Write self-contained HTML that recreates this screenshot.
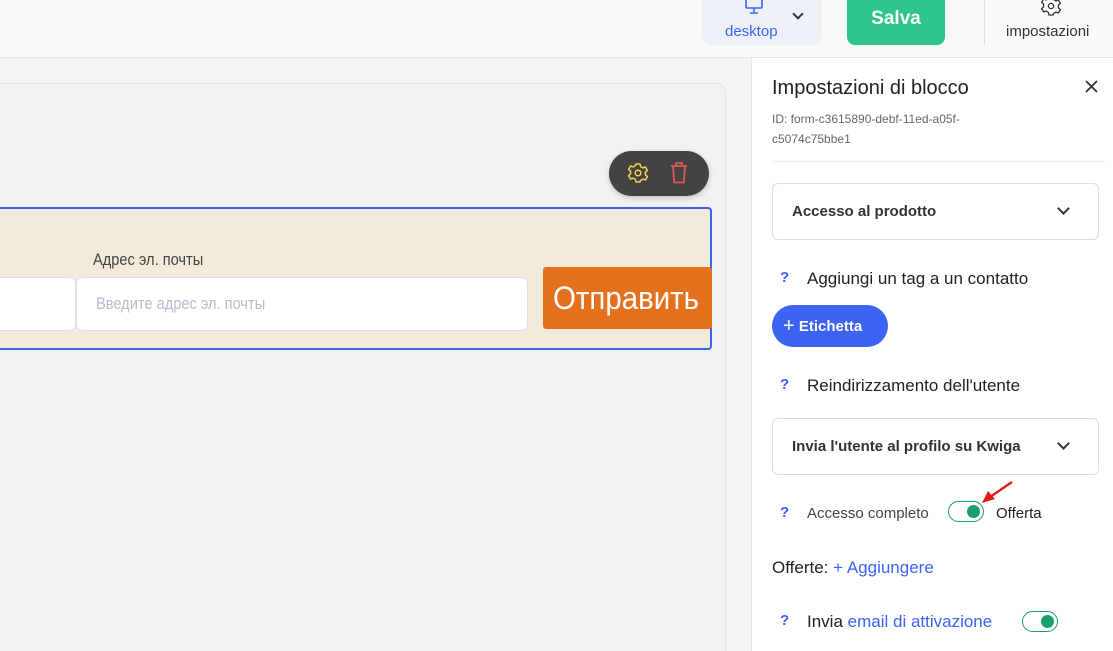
<!DOCTYPE html>
<html><head><meta charset="utf-8"><style>
*{box-sizing:border-box;margin:0;padding:0}
html,body{width:1113px;height:651px;overflow:hidden}
body{font-family:"Liberation Sans","DejaVu Sans",sans-serif;background:#f4f4f6;position:relative}
.top{position:absolute;left:0;top:0;width:1113px;height:58px;background:#fafafd;border-bottom:1px solid #e3e3e8}
.dev{position:absolute;left:702px;top:0;width:120px;height:45px;background:#eff1f8;border-radius:0 0 8px 8px}
.save{position:absolute;left:847px;top:0;width:98px;height:45px;background:#2ec48c;border-radius:0 0 8px 8px;color:#fff;font-weight:bold;font-size:19px;text-align:center;line-height:36px}
.canvas{position:absolute;left:-10px;top:83px;width:736px;height:600px;background:#f2f2f2;border:1px solid #e2e2e2;border-radius:10px}
.panel{position:absolute;left:751px;top:58px;width:362px;height:593px;background:#fff;border-left:1px solid #e6e6ea}
.sel{position:absolute;left:772px;width:327px;height:57px;border:1px solid #dcdde3;border-radius:6px;font-size:15px;font-weight:bold;color:#333;padding-left:19px;line-height:55px}
.q{position:absolute;left:780px;color:#3d63f5;font-weight:bold;font-size:15px}
.t{position:absolute;font-size:17px;color:#222}
.tog{position:absolute;width:36px;height:21px;border:1.5px solid #1a9e6c;border-radius:11px}
.tog::after{content:"";position:absolute;right:3px;top:3px;width:13px;height:13px;border-radius:50%;background:#1a9e6c}
.chev{position:absolute;width:9px;height:9px;border-right:2px solid #333;border-bottom:2px solid #333;transform:rotate(45deg)}
.cond{display:inline-block;transform:scaleX(0.86);transform-origin:left center;white-space:nowrap}
</style></head><body>
<div class="top">
 <div class="dev">
  <svg style="position:absolute;left:42px;top:-2px" width="20" height="16" viewBox="0 0 20 16"><rect x="2" y="-3" width="16" height="13" rx="1" fill="none" stroke="#3d63f5" stroke-width="1.6"/><path d="M10 10v4M6 15h8" stroke="#3d63f5" stroke-width="1.6"/></svg>
  <div style="position:absolute;left:23px;top:23px;font-size:15px;color:#3d63f5">desktop</div>
  <div class="chev" style="left:92px;top:10px;width:8px;height:8px"></div>
 </div>
 <div class="save" style="line-height:38px">Salva</div>
 <div style="position:absolute;left:984px;top:0;width:1px;height:45px;background:#e0e0e4"></div>
 <svg style="position:absolute;left:1039px;top:-6px" width="24" height="24" viewBox="0 0 24 24"><path d="M10 3h4l.6 2.6 2.3 1.3 2.5-.9 2 3.4-2 1.8v2.6l2 1.8-2 3.4-2.5-.9-2.3 1.3L14 21h-4l-.6-2.6-2.3-1.3-2.5.9-2-3.4 2-1.8v-2.6l-2-1.8 2-3.4 2.5.9 2.3-1.3z" fill="none" stroke="#333" stroke-width="1.3"/><circle cx="12" cy="12" r="2.6" fill="none" stroke="#333" stroke-width="1.3"/></svg>
 <div style="position:absolute;left:1006px;top:23px;font-size:15px;color:#333">impostazioni</div>
</div>
<div class="canvas"></div>
<div style="position:absolute;left:609px;top:151px;width:100px;height:45px;background:#434343;border-radius:23px;box-shadow:0 2px 6px rgba(0,0,0,.2)">
 <svg style="position:absolute;left:17px;top:10px" width="24" height="24" viewBox="0 0 24 24"><path d="M10 3h4l.6 2.6 2.3 1.3 2.5-.9 2 3.4-2 1.8v2.6l2 1.8-2 3.4-2.5-.9-2.3 1.3L14 21h-4l-.6-2.6-2.3-1.3-2.5.9-2-3.4 2-1.8v-2.6l-2-1.8 2-3.4 2.5.9 2.3-1.3z" fill="none" stroke="#f5d04a" stroke-width="1.5" stroke-linejoin="round"/><circle cx="12" cy="12" r="2.8" fill="none" stroke="#f5d04a" stroke-width="1.5"/></svg>
 <svg style="position:absolute;left:59px;top:10px" width="22" height="24" viewBox="0 0 22 24"><path d="M3 5h16M8 5V2h6v3M5 5l1.2 16.5h9.6L17 5" fill="none" stroke="#e05555" stroke-width="1.8" stroke-linejoin="round"/></svg>
</div>
<div style="position:absolute;left:-10px;top:207px;width:722px;height:143px;background:#f2eadb;border:2px solid #3d63f5;border-radius:4px">
 <div style="position:absolute;left:0;top:68px;width:84px;height:54px;background:#fff;border:1px solid #e0e0e8;border-radius:6px"></div>
 <div style="position:absolute;left:101px;top:41px;font-size:17px;color:#444"><span class="cond">Адрес эл. почты</span></div>
 <div style="position:absolute;left:84px;top:68px;width:452px;height:54px;background:#fff;border:1px solid #e0e0e8;border-radius:6px;font-size:17px;color:#b5bccc;padding-left:19px;line-height:52px"><span class="cond">Введите адрес эл. почты</span></div>
 <div style="position:absolute;left:551px;top:58px;width:169px;height:62px;background:#e5701d;border-radius:3px;color:#fff;font-size:32px;line-height:62px;padding-left:10px"><span class="cond" style="transform:scaleX(0.92)">Отправить</span></div>
</div>
<div class="panel"></div>
<div class="t" style="left:772px;top:77px;font-size:20px">Impostazioni di blocco</div>
<svg style="position:absolute;left:1085px;top:80px" width="13" height="13" viewBox="0 0 13 13"><path d="M1 1l11 11M12 1L1 12" stroke="#333" stroke-width="1.8"/></svg>
<div style="position:absolute;left:772px;top:109px;font-size:12px;color:#666;line-height:20px">ID: form-c3615890-debf-11ed-a05f-<br>c5074c75bbe1</div>
<div style="position:absolute;left:772px;top:161px;width:333px;height:1px;background:#ececf0"></div>
<div class="sel" style="top:183px">Accesso al prodotto</div>
<div class="chev" style="left:1059px;top:204px"></div>
<div class="q" style="top:269px">?</div>
<div class="t" style="left:807px;top:269px">Aggiungi un tag a un contatto</div>
<div style="position:absolute;left:772px;top:305px;width:116px;height:42px;background:#3d63f5;border-radius:21px;color:#fff;font-weight:bold;font-size:15px;line-height:42px;padding-left:11px"><span style="font-size:20px;font-weight:normal;vertical-align:-1px">+</span> Etichetta</div>
<div class="q" style="top:376px">?</div>
<div class="t" style="left:807px;top:376px">Reindirizzamento dell'utente</div>
<div class="sel" style="top:418px">Invia l'utente al profilo su Kwiga</div>
<div class="chev" style="left:1059px;top:439px"></div>
<div class="q" style="top:504px">?</div>
<div class="t" style="left:807px;top:505px;font-size:15px;color:#444">Accesso completo</div>
<div class="tog" style="left:948px;top:501px"></div>
<svg style="position:absolute;left:978px;top:480px" width="36" height="26" viewBox="0 0 36 26"><path d="M34 2L12 17" stroke="#e51b1b" stroke-width="2.4"/><path d="M4 23l6-12 7 8z" fill="#e51b1b"/></svg>
<div class="t" style="left:996px;top:505px;font-size:15px">Offerta</div>
<div class="t" style="left:772px;top:558px">Offerte: <span style="color:#3d63f5">+ Aggiungere</span></div>
<div class="q" style="top:612px">?</div>
<div class="t" style="left:807px;top:612px">Invia <span style="color:#3d63f5">email di attivazione</span></div>
<div class="tog" style="left:1022px;top:611px"></div>
</body></html>
